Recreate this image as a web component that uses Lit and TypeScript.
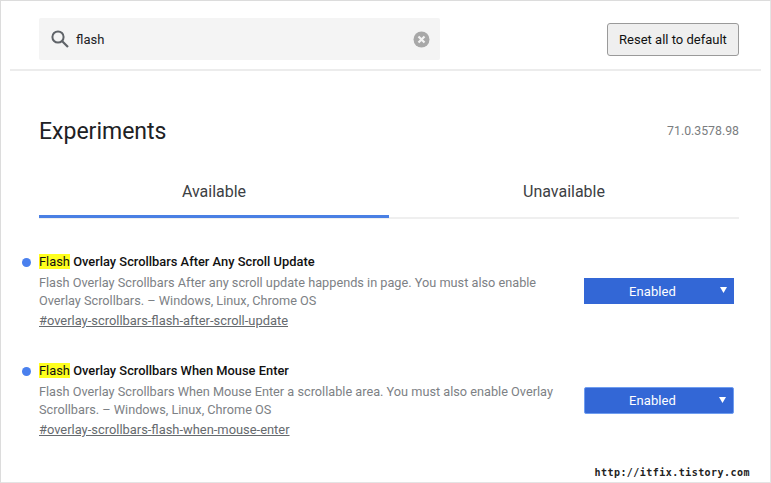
import { LitElement, html, css } from "lit";
import { customElement } from "lit/decorators.js";

const flags = [
  {
    name: " Overlay Scrollbars After Any Scroll Update",
    l1: "Flash Overlay Scrollbars After any scroll update happends in page. You must also enable",
    l2: "Overlay Scrollbars. – Windows, Linux, Chrome OS",
    link: "#overlay-scrollbars-flash-after-scroll-update",
    focus: false,
  },
  {
    name: " Overlay Scrollbars When Mouse Enter",
    l1: "Flash Overlay Scrollbars When Mouse Enter a scrollable area. You must also enable Overlay",
    l2: "Scrollbars. – Windows, Linux, Chrome OS",
    link: "#overlay-scrollbars-flash-when-mouse-enter",
    focus: true,
  },
];

@customElement("app-root")
export class AppRoot extends LitElement {
  static styles = css`
    :host {
      display: block;
      width: 771px;
      height: 483px;
      box-sizing: border-box;
      background: #fff;
      border-top: 1px solid #dcdcdc;
      border-left: 1px solid #dcdcdc;
      border-right: 1px solid #e4e4e4;
      border-bottom: 1px solid #e4e4e4;
      font-family: Roboto, "Liberation Sans", sans-serif;
      color: #202124;
      overflow: hidden;
      position: relative;
    }
    .top {
      height: 68px;
      margin: 0 9px;
      padding: 0 22px 0 29px;
      display: flex;
      justify-content: space-between;
      align-items: flex-start;
      border-bottom: 2px solid #ececec;
    }
    .search {
      margin-top: 17px;
      width: 401px;
      height: 42px;
      box-sizing: border-box;
      background: #f4f4f4;
      border-radius: 2px;
      display: flex;
      align-items: center;
      padding: 0 10px 0 11px;
      font-size: 13px;
      color: #202124;
    }
    .search svg.mag { width: 20px; height: 20px; }
    .search span { margin-left: 6px; flex: 1; }
    .reset {
      margin-top: 22px;
      width: 132px;
      height: 33px;
      box-sizing: border-box;
      border: 1px solid #9a9a9a;
      border-radius: 3px;
      background: #efefef;
      font: 13px Roboto, sans-serif;
      color: #111;
      display: flex;
      align-items: center;
      justify-content: center;
    }
    .main { padding: 0 31px 0 38px; }
    .head {
      display: flex;
      justify-content: space-between;
      align-items: center;
      margin-top: 44px;
      height: 32px;
    }
    h1 { margin: 0; font-size: 23px; font-weight: 400; color: #202124; }
    .ver { font-size: 12.3px; color: #7a7d80; }
    .tabs {
      display: flex;
      margin-top: 19px;
      border-bottom: 2px solid #efefef;
      height: 51px;
    }
    .tab {
      flex: 1;
      text-align: center;
      font-size: 16px;
      color: #3c4043;
      box-sizing: border-box;
      padding-top: 16px;
      height: 51px;
    }
    .tab.on { border-bottom: 3px solid #4a80e4; height: 52px; }
    .flags { margin-top: 33px; }
    .flag {
      display: grid;
      grid-template-columns: 1fr 150px;
      position: relative;
      height: 109px;
    }
    .dot {
      position: absolute;
      left: -17.5px;
      top: 5.5px;
      width: 9px;
      height: 9px;
      border-radius: 50%;
      background: #4a80ee;
    }
    .name { font-size: 12.87px; font-weight: 500; color: #111; line-height: 20px; white-space: pre; }
    mark { background: #ffff1e; color: #111; padding: 0; font-weight: 400; }
    .desc { font-size: 12.72px; color: #7d8185; line-height: 17.5px; white-space: nowrap; margin-top: 2px; }
    .link { font-size: 12.9px; color: #666a6e; text-decoration: underline; line-height: 18px; margin-top: 3px; }
    .sel {
      margin-top: 26px;
      margin-left: -5px;
      width: 150px;
      height: 26px;
      box-sizing: border-box;
      background: #3367d6;
      color: #fff;
      font-size: 13px;
      letter-spacing: 0.1px;
      display: flex;
      align-items: center;
      justify-content: center;
      position: relative;
      padding-right: 13px;
    }
    .sel.focus { border: 1px solid #6f9df0; border-radius: 2px; height: 27px; }
    .sel svg { position: absolute; right: 7px; top: 9px; width: 7px; height: 6px; }
    .wm {
      position: absolute;
      right: 20px;
      bottom: 4px;
      font: bold 10px "DejaVu Sans Mono", monospace;
      letter-spacing: 0.46px;
      color: #222;
    }
  `;

  render() {
    return html`
      <div class="top">
        <div class="search">
          <svg class="mag" viewBox="0 0 20 20" fill="none" stroke="#5f6368">
            <circle cx="8" cy="8" r="5.6" stroke-width="2"></circle>
            <path d="M12.2 12.2 L18 18" stroke-width="2.2"></path>
          </svg>
          <span>flash</span>
          <svg width="17" height="17" viewBox="0 0 17 17">
            <circle cx="8.5" cy="8.5" r="8" fill="#a8a8a8"></circle>
            <path d="M5.5 5.5 L11.5 11.5 M11.5 5.5 L5.5 11.5" stroke="#f3f3f3" stroke-width="2.2"></path>
          </svg>
        </div>
        <div class="reset">Reset all to default</div>
      </div>
      <div class="main">
        <div class="head"><h1>Experiments</h1><div class="ver">71.0.3578.98</div></div>
        <div class="tabs">
          <div class="tab on">Available</div>
          <div class="tab">Unavailable</div>
        </div>
        <div class="flags">
          ${flags.map(
            (f) => html`<div class="flag">
              <i class="dot"></i>
              <div>
                <div class="name"><mark>Flash</mark>${f.name}</div>
                <div class="desc">${f.l1}<br />${f.l2}</div>
                <div class="link">${f.link}</div>
              </div>
              <div class="sel ${f.focus ? "focus" : ""}">
                Enabled
                <svg viewBox="0 0 7 6"><path d="M0 0H7L3.5 6Z" fill="#fff"></path></svg>
              </div>
            </div>`
          )}
        </div>
      </div>
      <div class="wm">http://itfix.tistory.com</div>
    `;
  }
}
